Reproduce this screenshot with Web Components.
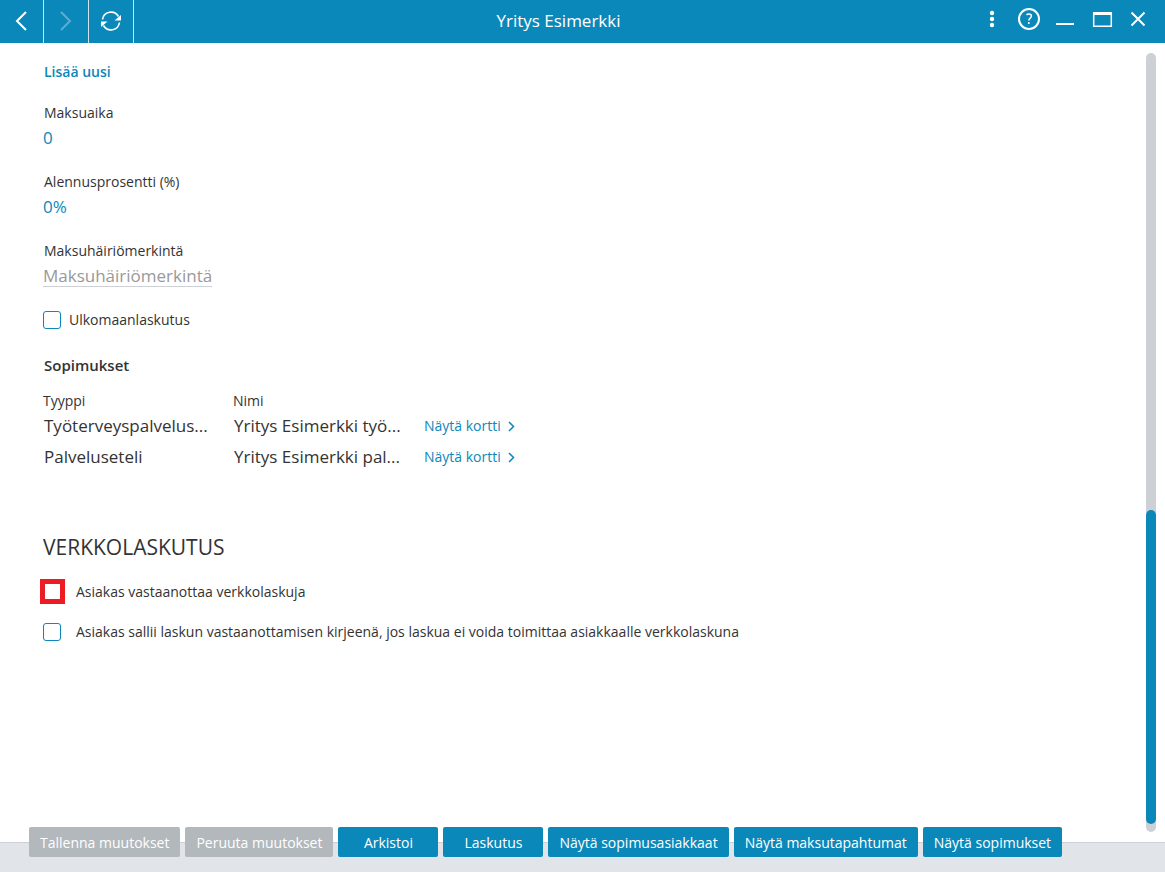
<!DOCTYPE html>
<html lang="fi">
<head>
<meta charset="utf-8">
<title>Yritys Esimerkki</title>
<style>
html, body { height: 100%; margin: 0; }
body {
  --blue: #0b88ba;
  --rule: #cdd1d5;
  --text: #333;
  font: 14px/20px "Open Sans", "Noto Sans", sans-serif;
  color: var(--text);
  background: #fff;
}
</style>
</head>
<body>
<customer-window></customer-window>
<script>
const define = (name, html, setup) => {
  const template = document.createElement('template');
  template.innerHTML = '<style>*{box-sizing:border-box}</style>' + html;
  customElements.define(name, class extends HTMLElement {
    constructor() {
      super();
      this.attachShadow({ mode: 'open' }).append(template.content.cloneNode(true));
    }
    connectedCallback() { if (setup) setup(this, this.shadowRoot); }
  });
};

define('title-bar', `
<style>
:host { display: flex; height: 43px; flex: none; background: var(--blue); color: #fff; }
nav, .tools { display: flex; flex: none; }
button { border: 0; padding: 0; background: none; color: inherit; display: flex; align-items: center; justify-content: center; }
nav button { width: 45px; padding-bottom: 2px; border-right: 1px solid #cfe3ec; }
nav button:first-child { width: 44px; }
nav button:disabled { color: #5dadd0; }
h1 { flex: 1; margin: 0; text-align: center; font-size: 17px; font-weight: 400; line-height: 41px; }
.tools { padding: 0 9px 5px 0; }
.tools button { width: 37px; }
.tools button:first-child { width: 18px; margin-right: 9px; }
.tools button:nth-child(3), .tools button:last-child { width: 36px; }
svg { fill: none; stroke: currentColor; stroke-width: 2; display: block; }
</style>
<nav aria-label="Navigointi">
<button aria-label="Takaisin"><svg width="24" height="24"><path d="M16 3 7 12l9 9"/></svg></button>
<button aria-label="Eteenpäin" disabled><svg width="24" height="24"><path d="M7 3l9 9-9 9"/></svg></button>
<button aria-label="Päivitä"><svg width="24" height="24"><path d="M3.500 10.500a8.600 8.600 0 0 1 16-3M20.500 13.500a8.600 8.600 0 0 1-16 3" stroke-width="1.600"/><path d="M22 6v5.500h-6.500zM2 18v-5.500h6.500z" fill="currentColor" stroke="none"/></svg></button>
</nav>
<h1><slot></slot></h1>
<div class="tools">
<button aria-label="Valikko"><svg width="18" height="24"><g fill="currentColor" stroke="none"><circle cx="9" cy="6" r="2.200"/><circle cx="9" cy="12" r="2.200"/><circle cx="9" cy="18" r="2.200"/></g></svg></button>
<button aria-label="Ohje"><svg width="24" height="24"><circle cx="12" cy="12" r="10"/><path d="M9.500 7.900c.6-.6 1.400-.9 2.300-.9 1.600 0 2.600.8 2.600 2.100 0 2-2.600 2.200-2.600 4.500M11.800 15v2" stroke-width="1.500"/></svg></button>
<button aria-label="Pienennä"><svg width="24" height="24"><path d="M3 17h18"/></svg></button>
<button aria-label="Suurenna"><svg width="24" height="24"><path d="M3.700 6v13.300h17.600V6" stroke-width="1.500"/><path d="M3 6.500h19" stroke-width="3"/></svg></button>
<button aria-label="Sulje"><svg width="24" height="24"><path d="M5.500 5.500 18.500 18.500M18.500 5.500 5.500 18.500"/></svg></button>
</div>`);

define('text-field', `
<style>
:host { display: block; height: 69px; }
label { display: block; padding-left: 1px; height: 22px; }
input { display: block; width: 169px; height: 24px; padding: 2px 0 0; border: 0; border-bottom: 1px solid transparent; background: none; font: inherit; font-size: 17px; line-height: 21px; color: var(--blue); outline: 0; }
input:placeholder-shown { border-color: var(--rule); }
input::placeholder { color: #999; opacity: 1; }
</style>
<label for="field"></label><input id="field" type="text">`, (host, root) => {
  root.querySelector('label').textContent = host.getAttribute('label');
  const input = root.querySelector('input');
  input.value = host.getAttribute('value') || '';
  input.placeholder = host.getAttribute('placeholder') || '';
});

define('check-box', `
<style>
:host { display: block; }
label { display: flex; align-items: center; gap: var(--gap, 8px); min-height: 20px; }
input { appearance: none; flex: none; width: 18px; height: 18px; margin: 0; border: 1px solid var(--blue); border-radius: 3px; background: #fff; }
:host([marked]) input { width: 25px; height: 25px; margin: 0 -4px 0 -3px; border: 5px solid #ed1c24; border-radius: 0; }
</style>
<label><input type="checkbox"><span><slot></slot></span></label>`);

define('card-link', `
<style>
:host { display: block; }
a { display: inline-flex; align-items: center; gap: 6px; color: var(--blue); text-decoration: none; }
svg { fill: none; stroke: currentColor; stroke-width: 1.500; }
</style>
<a href="#kortti"><slot></slot><svg width="8" height="12"><path d="M2 2l4.500 4.500L2 11"/></svg></a>`);

define('contract-list', `
<style>
:host { display: block; }
h3 { margin: 0; padding-left: 1px; font-size: 15px; font-weight: 600; line-height: 20px; }
table { margin-top: 15px; border-collapse: collapse; table-layout: fixed; width: 490px; }
th { padding: 2px 0 0; font-weight: 400; line-height: 18px; text-align: left; }
th:first-child, td:first-child { width: 190px; }
th:nth-child(2) { width: 191px; }
td { height: 31px; padding: 0 0 0 1px; font-size: 17px; line-height: 24px; white-space: nowrap; }
td:last-child { padding: 0; font-size: 14px; }
</style>
<h3>Sopimukset</h3>
<table>
<thead><tr><th>Tyyppi</th><th>Nimi</th><th></th></tr></thead>
<tbody>
<tr><td>Työterveyspalvelus...</td><td>Yritys Esimerkki työ...</td><td><card-link>Näytä kortti</card-link></td></tr>
<tr><td>Palveluseteli</td><td>Yritys Esimerkki pal...</td><td><card-link>Näytä kortti</card-link></td></tr>
</tbody>
</table>`);

define('scroll-rail', `
<style>
:host { display: flex; flex-direction: column; flex: none; width: 10px; margin: 10px 9px -5px 0; padding-bottom: 8px; border-radius: 5px; background: var(--rule); }
.above { flex: 457; }
.thumb { flex: 314; border-radius: 5px; background: var(--blue); }
</style>
<div class="above"></div><div class="thumb"></div>`);

define('action-button', `
<style>
:host { display: block; }
button { min-width: 100px; height: 30px; padding: 2px 11px 0; border: 0; border-radius: 2px; background: var(--blue); color: #fff; font: inherit; white-space: nowrap; }
button:disabled { background: #b2b8bc; }
</style>
<button type="button"><slot></slot></button>`, (host, root) => {
  root.querySelector('button').disabled = host.hasAttribute('disabled');
});

define('customer-window', `
<style>
:host { display: flex; flex-direction: column; min-height: 100vh; }
.body { flex: 1; display: flex; }
main { flex: 1; padding: 19px 24px 0 43px; }
.add { display: block; width: max-content; margin: 0 0 21px 1px; color: var(--blue); font-weight: 600; text-decoration: none; }
contract-list { margin-top: 25px; }
h2 { margin: 60px 0 17px; font-size: 21px; font-weight: 400; line-height: 30px; }
.einvoice { --gap: 15px; display: grid; gap: 18px; }
footer { flex: none; display: flex; gap: 5px; padding: 0 29px 15px; background: linear-gradient(transparent 15px, var(--rule) 15px, var(--rule) 16px, #e1e4e9 16px); }
</style>
<title-bar>Yritys Esimerkki</title-bar>
<div class="body">
<main>
<a class="add" href="#uusi">Lisää uusi</a>
<text-field label="Maksuaika" value="0"></text-field>
<text-field label="Alennusprosentti (%)" value="0%"></text-field>
<text-field label="Maksuhäiriömerkintä" placeholder="Maksuhäiriömerkintä"></text-field>
<check-box>Ulkomaanlaskutus</check-box>
<contract-list></contract-list>
<h2>VERKKOLASKUTUS</h2>
<div class="einvoice">
<check-box marked>Asiakas vastaanottaa verkkolaskuja</check-box>
<check-box>Asiakas sallii laskun vastaanottamisen kirjeenä, jos laskua ei voida toimittaa asiakkaalle verkkolaskuna</check-box>
</div>
</main>
<scroll-rail></scroll-rail>
</div>
<footer>
<action-button disabled>Tallenna muutokset</action-button>
<action-button disabled>Peruuta muutokset</action-button>
<action-button>Arkistoi</action-button>
<action-button>Laskutus</action-button>
<action-button>Näytä sopimusasiakkaat</action-button>
<action-button>Näytä maksutapahtumat</action-button>
<action-button>Näytä sopimukset</action-button>
</footer>`);
</script>
</body>
</html>
